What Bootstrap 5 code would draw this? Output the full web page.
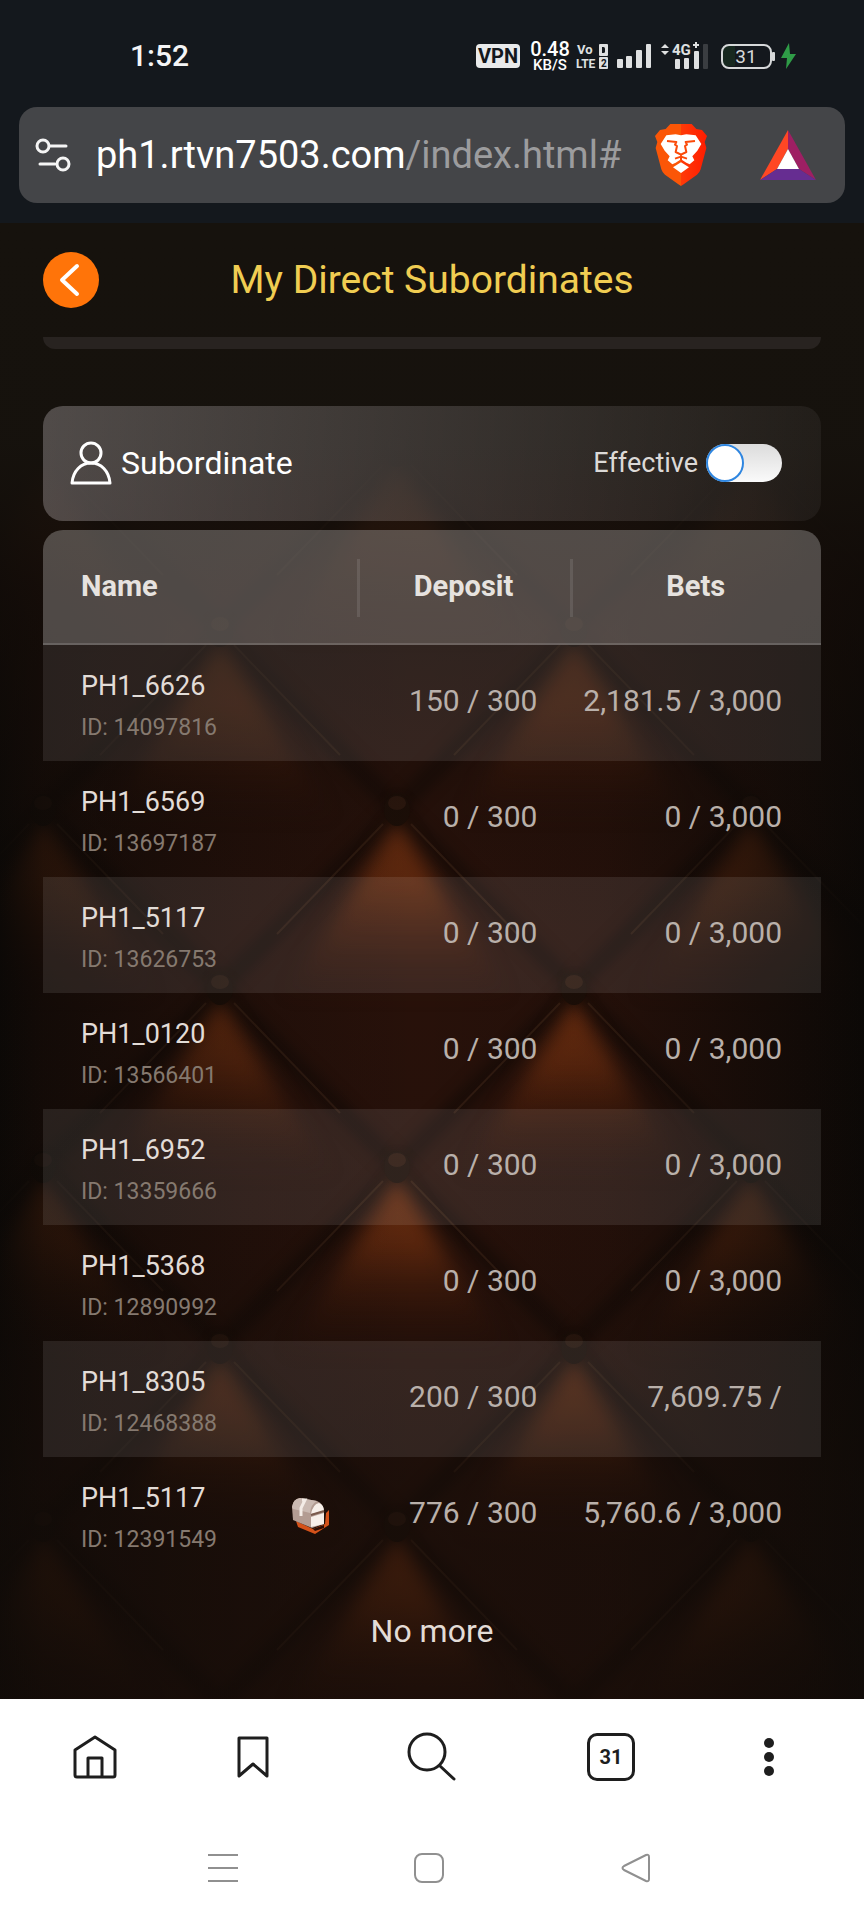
<!DOCTYPE html>
<html lang="en">
<head>
<meta charset="utf-8">
<meta name="viewport" content="width=device-width, initial-scale=1">
<title>My Direct Subordinates</title>
<link href="https://cdn.jsdelivr.net/npm/bootstrap@5.3.0/dist/css/bootstrap.min.css" rel="stylesheet">
<style>
  body { font-family: Roboto, "Noto Sans", sans-serif; background: #14181d; color: #fff; }
  svg { display: block; }
  .plain-btn { background: none; border: 0; padding: 0; color: inherit; }

  /* phone status bar and browser address bar */
  .status-bar { height: 107px; padding: 5px 66px 0 130px; }
  .clock { font-size: 30px; line-height: 36px; font-weight: 500; color: #f4f5f6; }
  .vpn { background: #e9eaeb; color: #14181d; font-size: 20px; line-height: 24px; font-weight: 700; border-radius: 4px; width: 44px; text-align: center; }
  .speed { font-size: 20px; line-height: 18px; font-weight: 500; text-align: center; width: 44px; }
  .speed small { display: block; font-size: 15px; line-height: 15px; }
  .address-wrap { padding: 0 19px 20px; }
  .address { height: 96px; border-radius: 18px; background: #444548; padding: 0 29px 0 15px; }
  .url { font-size: 38px; line-height: 48px; color: #fff; text-decoration: none; white-space: nowrap; }
  .url span { color: #9c9c9e; }
  .shield { margin-right: 53px; }

  /* page */
  .stage { position: relative; background: #16120d; overflow: hidden; }
  .leather { position: absolute; inset: 0; width: 100%; height: 100%; }
  .stage-body { position: relative; }
  .title-bar { height: 114px; padding: 0 43px; }
  .back { width: 56px; height: 56px; border-radius: 50%; background: #ff7409; }
  .title-bar h1 { font-size: 39px; line-height: 48px; font-weight: 400; color: #f0cd52; margin: 0; }
  .side { width: 56px; }
  .lists { padding: 0 43px; }
  .peek { height: 12px; background: #282320; border-radius: 0 0 20px 20px; margin-bottom: 57px; }
  .panel { height: 115px; border-radius: 20px; padding: 0 39px 2px 26px; margin-bottom: 9px;
    background: linear-gradient(95deg, rgba(255,246,252,.25), rgba(255,246,252,.16) 45%, rgba(255,246,252,.05)); }
  .panel h2 { font-size: 32px; line-height: 40px; font-weight: 400; margin: 0; }
  .panel label { font-size: 27px; line-height: 40px; color: #dcd9d7; }
  .toggle.form-check-input { width: 76px; height: 38px; margin: 0; border: 0; border-radius: 19px; float: none;
    background: linear-gradient(#dcdcdc, #fafafa); box-shadow: none; }
  .toggle::before { content: ""; display: block; width: 38px; height: 38px; border-radius: 50%; background: #fff; border: 2px solid #2f86e0; }
  .toggle:checked::before { margin-left: 38px; }

  .people { width: 100%; table-layout: fixed; border-collapse: separate; border-spacing: 0; }
  .people th { height: 115px; padding: 0 0 2px; font-size: 29px; line-height: 40px; font-weight: 700; text-align: center; vertical-align: middle;
    color: #e6e2df; background: rgba(255,255,255,.25); border-bottom: 2px solid rgba(255,255,255,.14); }
  .people th:first-child { text-align: left; padding-left: 38px; border-top-left-radius: 20px; }
  .people th:last-child { border-top-right-radius: 20px; }
  .people th + th { background: linear-gradient(rgba(255,255,255,.1), rgba(255,255,255,.1)) 0 52% / 3px 58px no-repeat rgba(255,255,255,.25); }
  .people td { height: 116px; padding: 0 0 4px; vertical-align: middle; font-size: 30px; line-height: 40px; color: #b9b0aa; text-align: right; white-space: nowrap; }
  .people tbody tr:nth-child(odd) td { background: rgba(255,255,255,.09); }
  .people td:nth-child(2) { padding-right: 33px; }
  .people td:nth-child(3) { padding-right: 39px; }
  .people td:first-child { text-align: left; padding: 9px 28px 0 38px; }
  .person { font-size: 27px; line-height: 40px; color: #e2dcd7; }
  .person-id { font-size: 23px; line-height: 44px; color: #85796f; }
  .col-deposit { width: 27.5%; }
  .col-bets { width: 32.2%; }
  .no-more { font-size: 32px; line-height: 40px; color: #e3dcd6; padding: 38px 0 48px; margin: 0; }

  /* browser toolbar and system keys */
  .bottom { background: #fff; color: #1e1e1e; }
  .toolbar { height: 116px; padding: 0 16px; }
  .toolbar button { flex: 158 1 0; height: 72px; }
  .toolbar .wide { flex-grow: 200; }
  .tab-count { width: 48px; height: 48px; border: 3px solid #1e1e1e; border-radius: 10px; font-size: 20px; line-height: 42px; font-weight: 700; }
  .keys { height: 105px; padding: 0 125px 0 120px; color: #909090; }
  .keys button { flex: 1 1 0; height: 64px; }
</style>
</head>
<body>
<header>
  <div class="status-bar d-flex align-items-center justify-content-between">
    <div class="clock">1:52</div>
    <div class="d-flex align-items-center">
      <span class="vpn">VPN</span>
      <span class="speed ms-2">0.48<small>KB/S</small></span>
      <svg class="ms-1" width="34" height="28" viewBox="0 0 34 28" fill="#dfe0e1" font-family="Roboto, sans-serif" font-weight="700" aria-label="VoLTE">
        <text x="1" y="12" font-size="13">Vo</text><text x="0" y="26" font-size="12">LTE</text>
        <rect x="23" y="2" width="9" height="12" rx="1"/><rect x="23" y="15" width="9" height="12" rx="1"/>
        <path d="M26 5h1.500q1.500 0 1.500 1.500v3q0 1.500-1.500 1.500h-1.500z" fill="#14181d"/>
        <text x="25" y="25" font-size="10" fill="#14181d">2</text>
      </svg>
      <svg class="ms-1" width="38" height="26" viewBox="0 0 38 26" fill="#dfe0e1"><rect x="3" y="16" width="6" height="9" rx="1"/><rect x="12" y="13" width="6" height="12" rx="1"/><rect x="22" y="7" width="6" height="18" rx="1"/><rect x="32" y="1" width="5" height="24" rx="1"/></svg>
      <svg class="ms-2" width="52" height="28" viewBox="0 0 52 28" fill="#dfe0e1" font-family="Roboto, sans-serif" font-weight="700">
        <path d="M1 6l4-4 4 4zM1 9h8l-4 4z"/><text x="12" y="13" font-size="15">4G</text><path d="M33 2h2v-2h2v2h2v2h-2v2h-2v-2h-2z"/>
        <rect x="15" y="17" width="5" height="10" rx="1"/><rect x="24" y="16" width="5" height="11" rx="1"/><rect x="34" y="9" width="5" height="18" rx="1"/><rect x="43" y="2" width="5" height="25" rx="1" fill="#3a3d41"/>
      </svg>
      <svg class="ms-2" width="78" height="28" viewBox="0 0 78 28">
        <path d="M3 4h12v20H7q-4 0-4-4z" fill="#17281f"/>
        <rect x="2" y="3" width="49" height="23" rx="7" fill="none" stroke="#d6d8d9" stroke-width="2"/><rect x="52" y="10" width="3" height="9" rx="1" fill="#d6d8d9"/>
        <text x="26" y="21" font-size="19" text-anchor="middle" fill="#d6d8d9" font-family="Roboto, sans-serif">31</text>
        <path d="M69 1L61 16h6l-1 11 10-15h-6z" fill="#2f9c47"/>
      </svg>
    </div>
  </div>
  <div class="address-wrap">
    <div class="address d-flex align-items-center">
      <button class="plain-btn" type="button" aria-label="Site settings">
        <svg width="38" height="36" viewBox="0 0 38 36" fill="none" stroke="#f5f5f5" stroke-width="3" stroke-linecap="round"><circle cx="9" cy="9" r="6"/><path d="M16 9h16M6 27h15"/><circle cx="29" cy="27" r="6"/></svg>
      </button>
      <a class="url ms-4 flex-grow-1" href="#">ph1.rtvn7503.com<span>/index.html#</span></a>
      <button class="plain-btn shield" type="button" aria-label="Shields">
        <svg width="52" height="62" viewBox="0 0 156 186">
          <defs><linearGradient id="lion" x2="1"><stop offset=".5" stop-color="#fb5607"/><stop offset=".5" stop-color="#ff3a08"/><stop offset="1" stop-color="#ff1c00"/></linearGradient></defs>
          <path fill="url(#lion)" d="M46 0H110L124 15 141 18 156 36 149 54 154 72 137 136Q134 146 126 152L86 181 78 186 70 181 30 152Q22 146 19 136L2 72 7 54 0 36 15 18 32 15Z"/>
          <path fill="#fff" d="M34 34L62 31 78 34 94 31 122 34 139 60 127 80 112 97 118 109 104 121 94 116 78 106 62 116 52 121 38 109 44 97 29 80 17 60ZM78 115L102 130 78 147 54 130Z"/>
          <path fill="none" stroke="#fb4a0a" stroke-width="6" stroke-linejoin="round" d="M36 51L64 54 60 62 66 66 62 84 78 92 94 84 90 66 96 62 92 54 120 51M78 92V108M60 104L78 98 96 104"/>
        </svg>
      </button>
      <button class="plain-btn" type="button" aria-label="Rewards">
        <svg width="56" height="50" viewBox="0 0 56 50"><path fill="#ff4724" d="M28 0V19L17 39 0 50Z"/><path fill="#9e1f63" d="M28 0L56 50 39 39 28 19Z"/><path fill="#662d91" d="M0 50L17 39H39L56 50Z"/><path fill="#fff" d="M28 19L39 39H17Z"/></svg>
      </button>
    </div>
  </div>
</header>

<main class="stage">
  <!-- buttoned leather wall -->
  <svg class="leather" viewBox="0 223 864 1476" preserveAspectRatio="xMidYMin slice" aria-hidden="true">
    <defs>
      <linearGradient id="lit" gradientUnits="userSpaceOnUse" x1="0" y1="20" x2="0" y2="195"><stop offset="0" stop-color="#6e2e0f"/><stop offset=".35" stop-color="#60280e"/><stop offset=".65" stop-color="#481d0b" stop-opacity=".6"/><stop offset="1" stop-color="#301006" stop-opacity="0"/></linearGradient>
      <linearGradient id="sides" x2="1"><stop offset="0" stop-color="#0a0806" stop-opacity=".95"/><stop offset=".05" stop-color="#0a0806" stop-opacity=".7"/><stop offset=".28" stop-color="#0a0806" stop-opacity=".25"/><stop offset=".48" stop-color="#0a0806" stop-opacity="0"/><stop offset=".7" stop-color="#0a0806" stop-opacity=".12"/><stop offset=".92" stop-color="#0a0806" stop-opacity=".72"/><stop offset="1" stop-color="#0a0806" stop-opacity=".95"/></linearGradient>
      <linearGradient id="fall" x2="0" y2="1"><stop offset="0" stop-color="#16120d"/><stop offset=".15" stop-color="#16120d" stop-opacity=".97"/><stop offset=".25" stop-color="#140d09" stop-opacity=".7"/><stop offset=".36" stop-color="#140d09" stop-opacity=".3"/><stop offset=".48" stop-color="#140d09" stop-opacity="0"/><stop offset=".7" stop-color="#140d09" stop-opacity=".1"/><stop offset=".85" stop-color="#140d09" stop-opacity=".55"/><stop offset="1" stop-color="#140d09" stop-opacity=".6"/></linearGradient>
      <filter id="soft" x="-30%" y="-30%" width="160%" height="160%" color-interpolation-filters="sRGB"><feGaussianBlur stdDeviation="9"/></filter>
      <filter id="soft2" x="-30%" y="-30%" width="160%" height="160%" color-interpolation-filters="sRGB"><feGaussianBlur stdDeviation="7"/></filter>
      <g id="tuft">
        <path d="M-176 182L0 8 176 182" fill="none" stroke="#120905" stroke-width="18" opacity=".65" filter="url(#soft2)"/>
        <path d="M0 18L118 200H-118Z" fill="url(#lit)" filter="url(#soft)"/>
        <path d="M-120 130L-14 20M14 20L120 130" fill="none" stroke="#5a3826" stroke-width="2" opacity=".35"/>
        <ellipse cx="0" cy="6" rx="13" ry="16" fill="#1c0e07"/><ellipse cx="0" cy="-1" rx="9" ry="7" fill="#3a2014" opacity=".6"/>
      </g>
    </defs>
    <rect y="223" width="864" height="1476" fill="#28110a"/>
    <use href="#tuft" x="43" y="445"/><use href="#tuft" x="397" y="445"/><use href="#tuft" x="751" y="445"/>
    <use href="#tuft" x="220" y="625"/><use href="#tuft" x="574" y="625"/>
    <use href="#tuft" x="43" y="804"/><use href="#tuft" x="397" y="804"/><use href="#tuft" x="751" y="804"/>
    <use href="#tuft" x="220" y="983"/><use href="#tuft" x="574" y="983"/>
    <use href="#tuft" x="43" y="1161"/><use href="#tuft" x="397" y="1161"/><use href="#tuft" x="751" y="1161"/>
    <use href="#tuft" x="220" y="1342"/><use href="#tuft" x="574" y="1342"/>
    <use href="#tuft" x="43" y="1520"/><use href="#tuft" x="397" y="1520"/><use href="#tuft" x="751" y="1520"/>
    <rect y="223" width="864" height="1476" fill="url(#sides)"/>
    <rect y="223" width="864" height="1476" fill="url(#fall)"/>
  </svg>

  <div class="stage-body">
    <div class="title-bar d-flex align-items-center justify-content-between">
      <button class="plain-btn back d-flex align-items-center justify-content-center" type="button" aria-label="Back">
        <svg width="56" height="56" viewBox="0 0 56 56" fill="none" stroke="#fff" stroke-width="4" stroke-linecap="round" stroke-linejoin="round"><path d="M34 14L19 28 34 42"/></svg>
      </button>
      <h1>My Direct Subordinates</h1>
      <span class="side"></span>
    </div>
    <div class="lists">
      <div class="peek"></div>
      <div class="panel d-flex align-items-center justify-content-between">
        <div class="d-flex align-items-center gap-2">
          <svg width="44" height="44" viewBox="0 0 44 44" fill="none" stroke="#fff" stroke-width="3" stroke-linejoin="round"><circle cx="22" cy="12" r="10"/><path d="M3 42C4 30 12 22 22 22S40 30 41 42Z"/></svg>
          <h2>Subordinate</h2>
        </div>
        <div class="d-flex align-items-center gap-2">
          <label for="effective">Effective</label>
          <input class="form-check-input toggle" type="checkbox" role="switch" id="effective">
        </div>
      </div>

      <table class="people">
        <colgroup><col><col class="col-deposit"><col class="col-bets"></colgroup>
        <thead><tr><th scope="col">Name</th><th scope="col">Deposit</th><th scope="col">Bets</th></tr></thead>
        <tbody>
          <tr><td><div class="person">PH1_6626</div><div class="person-id">ID: 14097816</div></td><td>150 / 300</td><td>2,181.5 / 3,000</td></tr>
          <tr><td><div class="person">PH1_6569</div><div class="person-id">ID: 13697187</div></td><td>0 / 300</td><td>0 / 3,000</td></tr>
          <tr><td><div class="person">PH1_5117</div><div class="person-id">ID: 13626753</div></td><td>0 / 300</td><td>0 / 3,000</td></tr>
          <tr><td><div class="person">PH1_0120</div><div class="person-id">ID: 13566401</div></td><td>0 / 300</td><td>0 / 3,000</td></tr>
          <tr><td><div class="person">PH1_6952</div><div class="person-id">ID: 13359666</div></td><td>0 / 300</td><td>0 / 3,000</td></tr>
          <tr><td><div class="person">PH1_5368</div><div class="person-id">ID: 12890992</div></td><td>0 / 300</td><td>0 / 3,000</td></tr>
          <tr><td><div class="person">PH1_8305</div><div class="person-id">ID: 12468388</div></td><td>200 / 300</td><td>7,609.75 /</td></tr>
          <tr><td><div class="d-flex align-items-center justify-content-between"><div><div class="person">PH1_5117</div><div class="person-id">ID: 12391549</div></div>
            <svg class="mb-2" width="38" height="38" viewBox="0 0 38 38" role="img" aria-label="Chest">
              <path d="M5 24L22 32 34 27 35 16 38 13V28L24 37 7 30Z" fill="#d4521a"/><path d="M22 32L33 28V31L24 34Z" fill="#2a0d05"/>
              <path d="M1 10Q2 2 9 1L26 4Q33 7 33 15V27L21 31 2 23Z" fill="#b39c92"/>
              <path d="M1 10Q2 2 9 1L26 4Q20 7 19 16L11 14 2 12Z" fill="#cbbab2"/>
              <path d="M20 17Q22 7 28 6 33 8 33 14ZM20 20L33 16V27L20 30Z" fill="#f7efe9"/>
              <path d="M20 18L33 14" stroke="#7a5a4c" stroke-width="2"/><path d="M11 3L14 3 10 11V19" fill="none" stroke="#f4ece6" stroke-width="3"/>
            </svg></div></td><td>776 / 300</td><td>5,760.6 / 3,000</td></tr>
        </tbody>
      </table>
      <p class="no-more text-center">No more</p>
    </div>
  </div>
</main>

<footer class="bottom">
  <nav class="toolbar d-flex align-items-center" aria-label="Browser">
    <button class="plain-btn d-flex align-items-center justify-content-center" type="button" aria-label="Home"><svg width="46" height="46" viewBox="0 0 46 46" fill="none" stroke="currentColor" stroke-width="3" stroke-linejoin="round"><path d="M3 16L23 3 43 16V41Q43 43 41 43H5Q3 43 3 41ZM16 43V24H30V43"/></svg></button>
    <button class="plain-btn d-flex align-items-center justify-content-center" type="button" aria-label="Bookmarks"><svg width="34" height="46" viewBox="0 0 34 46" fill="none" stroke="currentColor" stroke-width="3" stroke-linejoin="round"><path d="M3 4H31V42L17 30 3 42Z"/></svg></button>
    <button class="plain-btn wide d-flex align-items-center justify-content-center" type="button" aria-label="Search"><svg width="50" height="50" viewBox="0 0 50 50" fill="none" stroke="currentColor" stroke-width="3" stroke-linecap="round"><circle cx="20" cy="20" r="18"/><path d="M33 34L47 47"/></svg></button>
    <button class="plain-btn d-flex align-items-center justify-content-center" type="button" aria-label="Tabs"><span class="tab-count">31</span></button>
    <button class="plain-btn d-flex align-items-center justify-content-center" type="button" aria-label="Menu"><svg width="12" height="40" viewBox="0 0 12 40" fill="currentColor"><circle cx="6" cy="6" r="5"/><circle cx="6" cy="20" r="5"/><circle cx="6" cy="34" r="5"/></svg></button>
  </nav>
  <nav class="keys d-flex align-items-center" aria-label="System">
    <button class="plain-btn d-flex align-items-center justify-content-center" type="button" aria-label="Recent apps"><svg width="30" height="30" viewBox="0 0 30 30" stroke="currentColor" stroke-width="2"><path d="M0 2H30M0 15H30M0 28H30"/></svg></button>
    <button class="plain-btn d-flex align-items-center justify-content-center" type="button" aria-label="Home screen"><svg width="30" height="30" viewBox="0 0 30 30" fill="none" stroke="currentColor" stroke-width="2"><rect x="1" y="1" width="28" height="28" rx="7"/></svg></button>
    <button class="plain-btn d-flex align-items-center justify-content-center" type="button" aria-label="Back key"><svg width="30" height="30" viewBox="0 0 30 30" fill="none" stroke="currentColor" stroke-width="2" stroke-linejoin="round"><path d="M25 2Q28 1 28 4V26Q28 29 25 28L3 17Q0 15 3 13Z"/></svg></button>
  </nav>
</footer>
<script src="https://cdn.jsdelivr.net/npm/bootstrap@5.3.0/dist/js/bootstrap.bundle.min.js"></script>
</body>
</html>
